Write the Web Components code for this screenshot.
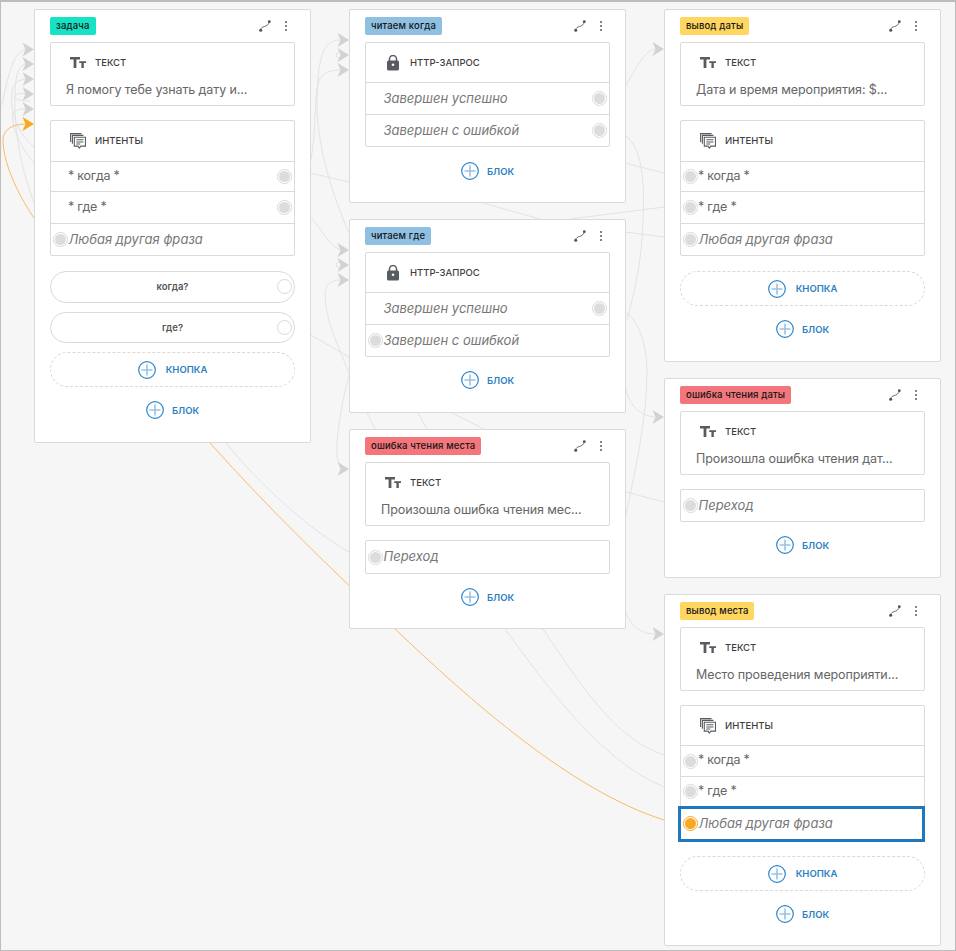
<!DOCTYPE html>
<html lang="ru"><head><meta charset="utf-8"><title>flow</title>
<style>
html,body{margin:0;padding:0;background:#f6f6f6}
body{font-family:Inter,"Noto Sans",sans-serif}
</style></head><body>
<flow-canvas>
  <flow-edges></flow-edges>

  <flow-node x="34" y="9" w="277" h="434" tag="задача" color="#17e2c4">
    <text-box label="ТЕКСТ" text="Я помогу тебе узнать дату и..."></text-box>
    <list-box icon="chat" label="ИНТЕНТЫ" style="margin-top:14px">
      <list-row h="29" side="right">* когда *</list-row>
      <list-row h="31" side="right">* где *</list-row>
      <list-row h="31" side="left" em>Любая другая фраза</list-row>
    </list-box>
    <pill-button style="margin-top:15px;height:32px">когда?</pill-button>
    <pill-button style="margin-top:9px;height:31px">где?</pill-button>
    <add-action dashed label="КНОПКА" style="margin-top:9px"></add-action>
    <add-action label="БЛОК" style="margin-top:13px"></add-action>
  </flow-node>

  <flow-node x="349" y="9" w="277" h="194" tag="читаем когда" color="#8fc0e2">
    <list-box icon="lock" label="HTTP-ЗАПРОС" head="39">
      <list-row h="31" side="right" em>Завершен успешно</list-row>
      <list-row h="31" side="right" em>Завершен с ошибкой</list-row>
    </list-box>
    <add-action label="БЛОК" style="margin-top:14px"></add-action>
  </flow-node>

  <flow-node x="349" y="219" w="277" h="194" tag="читаем где" color="#8fc0e2">
    <list-box icon="lock" label="HTTP-ЗАПРОС" head="39">
      <list-row h="31" side="right" em>Завершен успешно</list-row>
      <list-row h="31" side="left" em>Завершен с ошибкой</list-row>
    </list-box>
    <add-action label="БЛОК" style="margin-top:13px"></add-action>
  </flow-node>

  <flow-node x="349" y="429" w="277" h="200" tag="ошибка чтения места" color="#f2767b">
    <text-box label="ТЕКСТ" text="Произошла ошибка чтения мес..."></text-box>
    <list-box style="margin-top:14px" head="0">
      <list-row h="32" side="left" em first>Переход</list-row>
    </list-box>
    <add-action label="БЛОК" style="margin-top:13px"></add-action>
  </flow-node>

  <flow-node x="664" y="9" w="277" h="353" tag="вывод даты" color="#ffd65f">
    <text-box label="ТЕКСТ" text="Дата и время мероприятия: $..."></text-box>
    <list-box icon="chat" label="ИНТЕНТЫ" style="margin-top:14px">
      <list-row h="29" side="left">* когда *</list-row>
      <list-row h="31" side="left">* где *</list-row>
      <list-row h="31" side="left" em>Любая другая фраза</list-row>
    </list-box>
    <add-action dashed label="КНОПКА" style="margin-top:15px"></add-action>
    <add-action label="БЛОК" style="margin-top:13px"></add-action>
  </flow-node>

  <flow-node x="664" y="378" w="277" h="200" tag="ошибка чтения даты" color="#f2767b">
    <text-box label="ТЕКСТ" text="Произошла ошибка чтения дат..."></text-box>
    <list-box style="margin-top:14px" head="0">
      <list-row h="31" side="left" em first>Переход</list-row>
    </list-box>
    <add-action label="БЛОК" style="margin-top:13px"></add-action>
  </flow-node>

  <flow-node x="664" y="594" w="277" h="352" tag="вывод места" color="#ffd65f">
    <text-box label="ТЕКСТ" text="Место проведения мероприяти..."></text-box>
    <list-box icon="chat" label="ИНТЕНТЫ" head="39" style="margin-top:14px">
      <list-row h="30" side="left">* когда *</list-row>
      <list-row h="29" side="left">* где *</list-row>
      <list-row h="33" side="left" em active>Любая другая фраза</list-row>
    </list-box>
    <add-action dashed label="КНОПКА" style="margin-top:15px"></add-action>
    <add-action label="БЛОК" style="margin-top:13px"></add-action>
  </flow-node>
</flow-canvas>

<script>
const ICONS = {
  text:`<svg width="16" height="16" viewBox="0 0 16 16" fill="#585c60"><path d="M0 2h10v2.4H6.4v8.5H3.6V4.4H0z"/><path d="M9.2 6.2H16v1.9h-2.2v4.8h-2.4V8.1H9.2z"/></svg>`,
  chat:`<svg width="16" height="16" viewBox="0 0 16 16" fill="none" stroke="#585c60" stroke-width="1.1"><path d="M.6 9V.6H11.5M2.4 10.8V2.4H13.5"/><path d="M4.3 4.2h11.2v8.9h-4.6l-1.6 2-1.3-2H4.3z"/><path d="M6.3 6.7h7.2M6.3 9h7.2M6.3 11h4"/></svg>`,
  lock:`<svg width="16" height="16" viewBox="0 0 16 16"><path d="M4.5 6.5V4a3.5 3.5 0 0 1 7 0v2.5" fill="none" stroke="#585c60" stroke-width="1.5"/><rect x="2" y="5.5" width="12" height="10" rx="1.5" fill="#585c60"/><circle cx="8" cy="9.8" r="1.3" fill="#fff"/></svg>`,
  link:`<svg width="12" height="12" viewBox="0 0 12 12" fill="none"><path d="M1.6 10.4C2 7.5 3.5 7 5.5 6.5S9.5 5 10.4 1.6" stroke="#6a6e72"/><circle cx="1.7" cy="10.3" r="1.5" fill="#4f5357"/><circle cx="10.3" cy="1.7" r="1.4" fill="#4f5357"/></svg>`,
  plus:`<svg width="18" height="18" viewBox="0 0 18 18" fill="none"><circle cx="9" cy="9" r="8.3" stroke="#2b87cb" stroke-width="1.2"/><path d="M9 3.5v11M3.5 9h11" stroke="#97c3e6" stroke-width="1.6"/></svg>`
};
class Base extends HTMLElement{
  render(html){ const r=this.shadowRoot||this.attachShadow({mode:'open'}); r.innerHTML=html; }
}
customElements.define('flow-canvas',class extends Base{
  connectedCallback(){ this.render(`<style>:host{display:block;position:relative;box-sizing:border-box;width:956px;height:951px;overflow:hidden;background:#f6f6f6;border:1px solid #bdbdbd;border-top-width:2px;--bd:#dadada}
  .in{position:absolute;left:-1px;top:-2px;width:956px;height:951px}</style><div class="in"><slot></slot></div>`); }
});
customElements.define('flow-edges',class extends Base{
  connectedCallback(){
    const grey=[
    'M2 105C8 75 14 50 26 49.5','M34 203C20 165 14 130 15 97C15 80 17 66 26 64','M34 147C15 130 10 110 12 92C13 84 17 80 26 79',
    'M26 94C18 92 12 96 17 99C20 101 24 101 30 101','M34 163C22 150 10 125 13 113C15 110 20 109 26 109',
    'M310 163C318 130 312 85 322 76C326 72 332 70 340 70','M349 233C330 190 316 140 317 100C318 60 322 40 340 40','M340 52C335 52 335 58 340 58',
    'M310 173L349 182','M310 217C320 225 328 247 342 250','M311 335L349 357','M340 280C330 280 325 285 325 295C325 320 340 350 349 373',
    'M340 262C335 262 335 268 340 268','M349 375C340 410 336 440 337 455C338 465 342 468 345 469',
    'M367 413L375 429','M418 413L427 429','M452 413L484 429','M226 443C260 485 310 530 349 552',
    'M505 629C550 690 600 760 664 787','M543 629C590 700 620 740 664 755',
    'M626 85C635 70 645 50 655 49','M625 135C645 150 644 190 643 220C642 260 635 290 627 320','M625 312C640 320 647 350 647 370C647 420 635 470 626 515',
    'M625 385C628 405 640 416 655 417','M625 610C630 625 640 634 655 634','M625 163L664 173','M483 203L540 219','M570 219L664 207','M625 232L664 237','M626 492L664 502'];
    const tips=[[34,49.5],[34,64],[34,79],[34,94],[34,109],[349,40],[349,55],[349,70],[349,250],[349,265],[349,280],[349,469],[664,49],[664,417],[664,634]];
    const head=(x,y)=>`M${x} ${y}L${x-11.5} ${y-7}L${x-8.5} ${y}L${x-11.5} ${y+7}Z`;
    this.render(`<style>:host{display:block;position:absolute;left:0;top:0}svg{display:block}</style>
    <svg width="956" height="951" fill="none">
      ${grey.map(d=>`<path d="${d}" stroke="#e3e3e3"/>`).join('')}
      <path d="M34 218C15 190 3 160 3 140C3 130 12 124 26 124" stroke="#f9bc64"/>
      <path d="M210 443C270 510 330 568 395 629C470 700 570 790 664 820" stroke="#f9bc64"/>
      ${tips.map(t=>`<path d="${head(t[0],t[1])}" fill="#d2d2d2"/>`).join('')}
      <path d="${head(34,124)}" fill="#f8a823"/>
    </svg>`);
  }
});
customElements.define('flow-node',class extends Base{
  connectedCallback(){
    const a=n=>this.getAttribute(n);
    this.style.cssText+=`left:${a('x')}px;top:${a('y')}px;width:${a('w')}px;height:${a('h')}px;`;
    this.render(`<style>:host{display:flex;flex-direction:column;position:absolute;box-sizing:border-box;background:#fff;border:1px solid var(--bd);border-radius:2px;padding:7px 15px 0;color:#555}
    header{display:flex;align-items:center;height:18px;margin-bottom:7px}
    .tag{height:18px;padding:0 6px;border-radius:2px;font:500 9.5px/18px Inter,sans-serif;letter-spacing:.15px;color:#151515;background:${a('color')};white-space:nowrap}
    .link{margin-left:auto;display:flex;height:12px;position:relative;left:-1px}
    .keb{display:flex;flex-direction:column;justify-content:center;gap:1.4px;margin:0 7.8px 0 13.2px}
    .keb i{display:block;width:2.4px;height:2.4px;border-radius:50%;background:#585c60}
    ::slotted(*){flex:none}</style>
    <header><span class="tag">${a('tag')}</span><span class="link">${ICONS.link}</span><span class="keb"><i></i><i></i><i></i></span></header><slot></slot>`);
  }
});
const HEAD=`.head{display:flex;align-items:center;box-sizing:border-box;padding:0 0 0 19px;font:500 9.5px/12px Inter,sans-serif;color:#3f3f3f}
.head svg{display:block;margin-right:9px;flex:none}`;
customElements.define('text-box',class extends Base{
  connectedCallback(){
    this.render(`<style>:host{display:block;box-sizing:border-box;height:64px;background:#fff;border:1px solid var(--bd);border-radius:2px}
    ${HEAD}.head{height:39px;}.body{padding-left:15px;font:400 12.5px/16px Inter,sans-serif;letter-spacing:-.1px;color:#666;white-space:nowrap}</style>
    <div class="head">${ICONS.text}<span>${this.getAttribute('label')}</span></div><div class="body">${this.getAttribute('text')}</div>`);
  }
});
customElements.define('list-box',class extends Base{
  connectedCallback(){
    const h=this.getAttribute('head')||'40', ic=this.getAttribute('icon'), l=this.getAttribute('label');
    this.render(`<style>:host{display:block;box-sizing:border-box;background:#fff;border:1px solid var(--bd);border-radius:2px}
    ${HEAD}.head{height:${h}px;${h=='40'?'padding-bottom:1px':''}}</style>
    ${l?`<div class="head">${ICONS[ic]}<span>${l}</span></div>`:''}<slot></slot>`);
  }
});
customElements.define('list-row',class extends Base{
  connectedCallback(){
    const side=this.getAttribute('side'), em=this.hasAttribute('em'), act=this.hasAttribute('active'), first=this.hasAttribute('first');
    this.render(`<style>:host{display:flex;align-items:center;position:relative;box-sizing:border-box;height:${+this.getAttribute('h')+(first?0:1)}px;${first?'':'border-top:1px solid var(--bd);'}padding:0 0 2px ${em?17.5:17}px;
      font:${em?'italic ':''}400 ${em?13:12.5}px/16px Inter,sans-serif;letter-spacing:${em?'0':'-.25px'};color:${em?'#777':'#666'};white-space:nowrap}
    .r{position:absolute;top:50%;margin-top:-7.5px;${side=='left'?'left:1.5px':'right:2.5px'};width:15px;height:15px;box-sizing:border-box;border:1px solid ${act?'#f8a823':'#d9d9d9'};border-radius:50%;background:#fff;display:flex;align-items:center;justify-content:center}
    .r i{display:block;width:11px;height:11px;border-radius:50%;background:${act?'#f8a823':'#dcdcdc'}}
    .sel{position:absolute;left:-3px;right:-1px;top:-1px;bottom:-2px;border:3px solid #1f78bd;box-sizing:border-box;pointer-events:none}
    </style><slot></slot><span class="r"><i></i></span>${act?'<span class="sel"></span>':''}`);
  }
});
customElements.define('pill-button',class extends Base{
  connectedCallback(){
    this.render(`<style>:host{display:flex;align-items:center;justify-content:center;position:relative;box-sizing:border-box;background:#fff;border:1px solid var(--bd);border-radius:16px;font:600 9.5px/12px Inter,sans-serif;color:#555}
    .r{position:absolute;right:2.5px;top:50%;margin-top:-8px;width:15px;height:15px;box-sizing:border-box;border:1px solid #d9d9d9;border-radius:50%;background:#fff}</style><slot></slot><span class="r"></span>`);
  }
});
customElements.define('add-action',class extends Base{
  connectedCallback(){
    const d=this.hasAttribute('dashed');
    this.render(`<style>:host{display:flex;align-items:center;justify-content:center;gap:${d?10:8}px;box-sizing:border-box;height:${d?35:20}px;${d?'border:1px dashed #d9d9d9;border-radius:18px;':''}font:600 9.5px/12px Inter,sans-serif;color:#2b80c2}
    svg{display:block}span{position:relative;top:.5px}</style>${ICONS.plus}<span>${this.getAttribute('label')}</span>`);
  }
});
</script>
</body></html>
